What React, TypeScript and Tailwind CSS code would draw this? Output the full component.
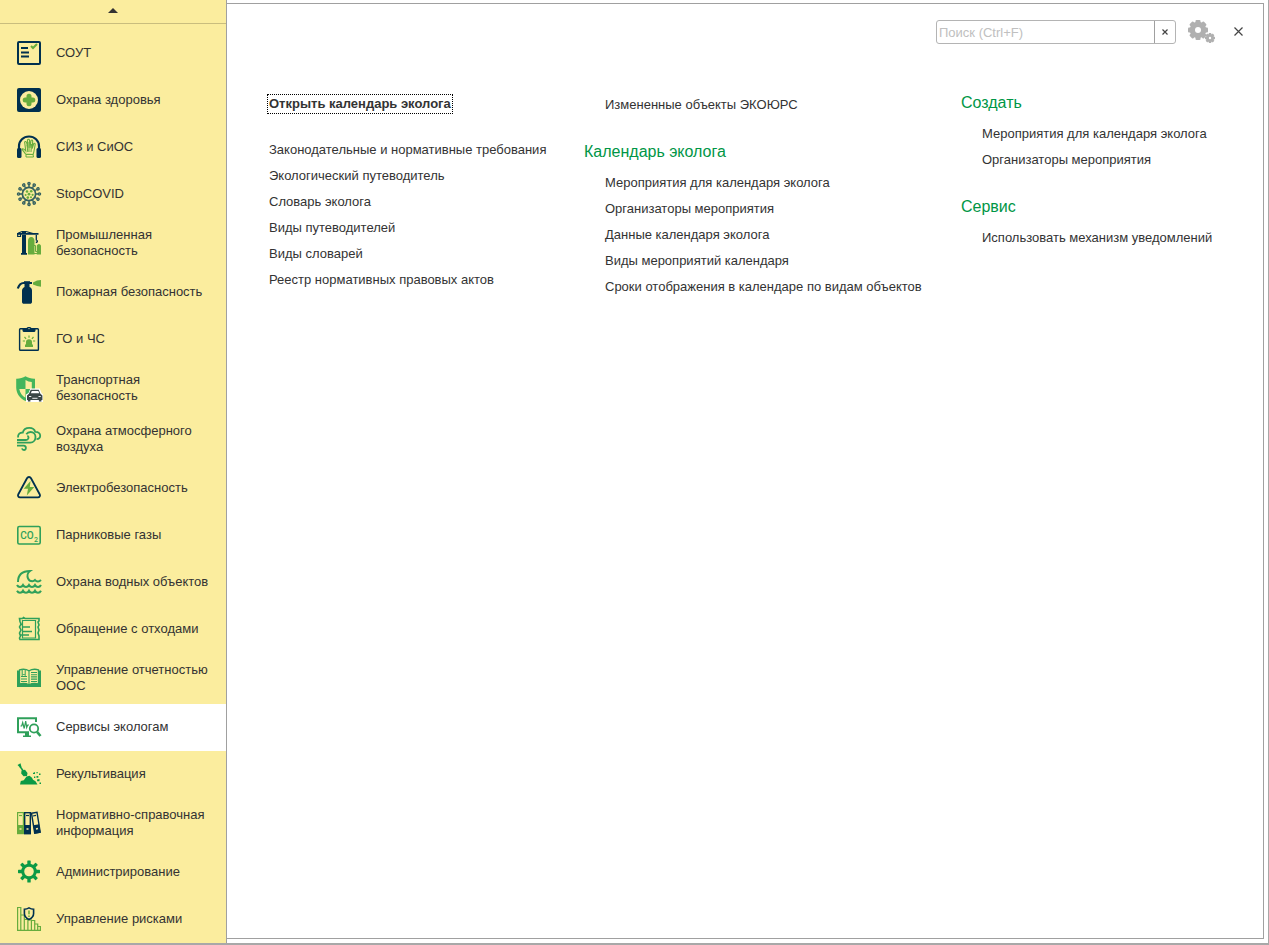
import React, { useState } from 'react';
import clsx from 'clsx';

const NAVY = '#00304f';
const LEAF = '#67ac3d';
const GREEN = '#2fa05a';
const CREAM = '#fbed9e';

const Icon = ({ children }: { children: React.ReactNode }) => (
  <svg width="24" height="24" viewBox="0 0 24 24" fill="none" className="shrink-0 overflow-visible" aria-hidden="true">
    {children}
  </svg>
);

const ChecklistIcon = () => (
  <Icon>
    <rect x="1" y="1" width="22" height="22" rx="1" stroke={NAVY} strokeWidth="2" />
    <path d="M4 7h7M4 11.5h8M4 15.5h8" stroke={NAVY} strokeWidth="1.8" />
    <path d="M14 5l2 2 4-4" stroke={LEAF} strokeWidth="2" />
  </Icon>
);

const HealthIcon = () => (
  <Icon>
    <rect width="24" height="24" rx="2" fill={NAVY} />
    <circle cx="12" cy="12" r="9" fill={CREAM} />
    <path d="M12 8.2v7.6M8.2 12h7.6" stroke={LEAF} strokeWidth="5" strokeLinecap="round" />
  </Icon>
);

const HeadphonesIcon = () => (
  <Icon>
    <path d="M2 14v-3a10 9.5 0 0 1 20 0v3" stroke={NAVY} strokeWidth="2.2" />
    <rect x="0" y="13" width="4.5" height="10" rx="1.5" fill={NAVY} />
    <rect x="19.5" y="13" width="4.5" height="10" rx="1.5" fill={NAVY} />
    <path d="M8.5 19c-1-2-3-3.5-3.5-5 1-.8 2.5.5 3.8 2L7.6 7c.8-1 1.5-.5 2 .5L11 13l-.5-8c.5-1 1.5-1 2 0l.5 8 1-7.5c.8-1 1.5-.5 1.700.5L15.200 13.500l1.600-5c.9-.6 1.500 0 1.400 1L17 16c-.3 2-.7 2.500-1 3.500z" stroke={LEAF} strokeWidth="1.100" />
    <path d="M12 7v10M14.500 9l-.5 8M10 10l.8 7" stroke={LEAF} strokeWidth="1" />
    <path d="M9 19.500h7l.5 2.500H9z" stroke={LEAF} strokeWidth="1" />
  </Icon>
);

const spikes = [0, 30, 60, 90, 120, 150, 180, 210, 240, 270, 300, 330];

const VirusIcon = () => (
  <Icon>
    <circle cx="12" cy="12" r="6.6" stroke="#35605f" strokeWidth="1.7" />
    {spikes.map((a) => (
      <g key={a} transform={`rotate(${a} 12 12)`} stroke="#35605f">
        <path d="M12 5V3" strokeWidth="1.4" />
        <circle cx="12" cy="1.6" r="1.1" strokeWidth="1.4" />
      </g>
    ))}
    <g fill={LEAF}>
      <circle cx="10" cy="9.5" r="1.3" />
      <circle cx="14.2" cy="9.3" r="1.3" />
      <circle cx="12" cy="12.2" r="1.4" />
      <circle cx="8.6" cy="13" r="1" />
      <circle cx="15.6" cy="12.8" r="1.1" />
      <circle cx="10.8" cy="15.6" r="1.3" />
      <circle cx="14" cy="15.3" r="1" />
    </g>
  </Icon>
);

const CraneIcon = () => (
  <Icon>
    <path d="M0 2h21.500v1.800H0zM5 0h4v2H5zM5 4h4v18H5zM4 22h6v1.800H4z" fill={NAVY} />
    <path d="M.7 3v2.500h2.800V3M9 .5l7 2M5 .5L1 2.200" stroke={NAVY} strokeWidth="1.200" />
    <path d="M19.300 4v5c1.500.5 1.500 2.500-.5 2.500" stroke={NAVY} strokeWidth="1.300" />
    <path d="M11 23.500V10c0-2 1-4 3.200-4s3.300 2 3.300 4v13.500zM19.800 23.500V15c0-1 1-2 2.100-2s2.100 1 2.100 2v8.500z" fill={LEAF} />
    <path d="M17 14.500h1.500v6H20M17 22.500h3" stroke={LEAF} strokeWidth="1" />
  </Icon>
);

const ExtinguisherIcon = () => (
  <Icon>
    <path d="M5 22V10.500C5 8.500 6.500 7.500 7.500 7V4h5v3c1.500.5 2.500 1.500 2.500 3.500V22c0 1.200-.8 1.800-2 1.800H7c-1.200 0-2-.6-2-1.800z" fill={NAVY} />
    <path d="M.8 8.500C2 5 3.500 3 6.500 3H15" stroke={NAVY} strokeWidth="2.200" />
    <path d="M7 1.200h6V3H7z" fill={NAVY} />
    <path d="M16 2.500L20 .6 24 0v6.800L20 6l-4-1.500z" fill={LEAF} />
  </Icon>
);

const ClipboardIcon = () => (
  <Icon>
    <rect x="2.600" y="1.700" width="18.800" height="21.500" rx=".8" stroke={NAVY} strokeWidth="1.400" />
    <path d="M5.500 1h4c.5-1.500 4.500-1.500 5 0h4v2.500c0 1-1 1.500-2 1.500h-9c-1 0-2-.5-2-1.500z" fill={NAVY} />
    <circle cx="12" cy="1.600" r=".7" fill={CREAM} />
    <path d="M9 17.500V15c0-1.800 1.200-2.800 3-2.800s3 1 3 2.800v2.500h1v2.500H8v-2.500z" fill={LEAF} />
    <path d="M12 8.500v2.300M7.500 10l1.600 1.800M16.500 10l-1.600 1.800M5.800 14H8M16 14h2.200" stroke={LEAF} strokeWidth="1.200" />
  </Icon>
);

const ShieldCarIcon = () => (
  <Icon>
    <path d="M8.500.3C6 2 2 3-.8 2.800v9C-.5 18 3 22.500 8.500 25 14 22.500 17.600 18 18 11.800v-9C15 3 11 2 8.500.3z" fill="#43b55c" />
    <path d="M8.500 4v9h6.300V6C12.500 6 10.500 5.200 8.500 4zM8.500 13H2.300c.6 4 3 7 6.200 8.700z" fill={CREAM} />
    <path d="M9 26v-7.500l2.500-1.500 1.800-4.500h9.400l1.800 4.500 1.500 1.500V26z" fill="#fff" />
    <path d="M10 19.500l2-1.700 1.700-4h8l1.700 4 2 1.700V24h-1v1.500h-2.500V24h-8.500v1.500h-2.500V24H10z" fill="#3b4746" />
    <path d="M13.800 17.300l1-2.300h6.500l1 2.300z" fill="#fff" />
    <path d="M12 20.500h2.300M21.500 20.500h2.300M15.300 22.300h5.200" stroke="#fff" strokeWidth=".9" />
  </Icon>
);

const WindIcon = () => (
  <Icon>
    <g stroke={GREEN} strokeWidth="1.800">
      <path d="M1 10.500C.8 7.300 3 5.300 5.800 5.500 6.500 2.700 9.300.9 12.300.9c3 0 5.200 1.500 6 4 2.800-.2 5 1.500 4.900 3.800 0 2-1.300 3.300-3.700 3.500" />
      <path d="M0 13h9c2.500 0 3.500-3.500 1.300-4" />
      <path d="M9.300 7.200c1-1.500 2.500-2.200 4.300-2.200 2.800 0 4.900 2.200 4.900 5 0 3.200-2.200 5.500-5.200 5.700H0" />
      <path d="M0 18.700h6.800c2.800.2 2.700 4.300.2 4.300-1.200 0-1.800-.6-2-1.600" />
    </g>
  </Icon>
);

const VoltageIcon = () => (
  <Icon>
    <path d="M10 2.200c.9-1.600 3.100-1.600 4 0l8.800 16.300c.7 1.500-.3 2.800-1.800 2.800H3c-1.500 0-2.500-1.300-1.800-2.800z" stroke={NAVY} strokeWidth="1.800" />
    <path d="M13.500 5L6.700 12.800H11L9.800 19.500 17.300 11h-4.500z" fill={LEAF} />
  </Icon>
);

const Co2Icon = () => (
  <Icon>
    <rect x=".8" y="3.500" width="22.400" height="17.500" rx="1.500" stroke={GREEN} strokeWidth="1.600" />
    <text x="3.300" y="16" fontSize="10" fontWeight="500" fontFamily="Roboto, sans-serif" fill={GREEN}>CO</text>
    <text x="17" y="18.500" fontSize="7" fontWeight="500" fontFamily="Roboto, sans-serif" fill={GREEN}>2</text>
  </Icon>
);

const WaterIcon = () => (
  <Icon>
    <g stroke={GREEN} strokeWidth="2">
      <path d="M1 12C1 5 5 1 13 1c-2.500 1.800-3 5-2 7.300.8 2 2.500 2.900 4.300 2.900 1.500 0 2.700-1.200 2.700-1.200.8 1 1.800 1.500 3 1.500s2-.5 3-1.500" />
      <path d="M0 15c.8 1.500 1.800 2 3 2s2.200-.5 3-2c.8 1.500 1.800 2 3 2s2.200-.5 3-2c.8 1.500 1.800 2 3 2s2.200-.5 3-2c.8 1.500 1.800 2 3 2s2.200-.5 3-2" />
      <path d="M0 20.700c.8 1.500 1.800 2 3 2s2.200-.5 3-2c.8 1.500 1.800 2 3 2s2.200-.5 3-2c.8 1.500 1.800 2 3 2s2.200-.5 3-2c.8 1.500 1.800 2 3 2s2.200-.5 3-2" />
    </g>
  </Icon>
);

const WasteIcon = () => (
  <Icon>
    <path d="M2.500 1.500h3l1-1 1.500 1h14v2.500l-1 1 1 3-1 2 1 3-1 3 1 3v3.500h-19l-.5-1.500 1-2-1-3 1.500-3-1.500-3 1.500-3-1-2.500z" stroke={GREEN} strokeWidth="1.600" />
    <path d="M5.500 3.500h13v17.500h-13z" stroke={GREEN} strokeWidth="1.200" />
    <path d="M6 10h7M6 14.500h9M6 18h6M3 7.500h3M3 18h2" stroke={GREEN} strokeWidth="1.400" />
  </Icon>
);

const BookIcon = () => (
  <Icon>
    <path d="M0 4.500h2V18h20V4.500h2V21H0z" fill={GREEN} />
    <path d="M2.500 3.800c3-.8 7-.5 9.500 1 2.500-1.500 6.500-1.800 9.500-1v14c-3-.6-7-.4-9.500 1-2.500-1.400-6.500-1.600-9.500-1z" fill={CREAM} stroke={GREEN} strokeWidth="1.300" />
    <path d="M12 5v13.500M4 10.500h6M4 13h6M4 15.500h6M14 6.500h6M14 8.700h6M14 10.900h6M14 13.100h6M14 15.500h6" stroke={GREEN} strokeWidth="1.100" />
    <path d="M5.200 3.500h3v6L6.700 8 5.200 9.500z" fill={CREAM} stroke={GREEN} strokeWidth="1" />
  </Icon>
);

const MonitorIcon = () => (
  <Icon>
    <path d="M12 17.200H1V3.200h18V7" stroke={GREEN} strokeWidth="2" />
    <path d="M8 17.500h4v3h2V22H6v-1.500h2z" fill={GREEN} />
    <path d="M3.500 11h1.200l1-3.500 1.500 6L8.700 6l1 6.500 1-2.500H12" stroke={GREEN} strokeWidth="1.200" />
    <circle cx="17" cy="13.500" r="4.200" stroke={GREEN} strokeWidth="1.800" />
    <path d="M20 16.800l3.500 4.200" stroke={GREEN} strokeWidth="2.600" />
  </Icon>
);

const ShovelIcon = () => (
  <Icon>
    <g fill="#0b9a45">
      <path d="M3 22.500l.8-3.500 3-.8 2.700-3.700 3-.8 2.500 2 1 2 2.500 1.500 2 3.300z" />
      <path d="M.5 3L3.500 1.300 4.500 5l-1 1zM4.500 8.500l3.500-.8L10.500 11l-.5 3-3.500.2-2.300-2.700z" />
      <path d="M16 11l2-1v2h-2zM19.500 14h1.800v1.700h-1.800zM22 11.500h1.500V13H22zM17 14.500h1.300V16H17zM20 17.500l2.500-.5v2.300h-2.300zM22.500 20.500H24V22h-1.500zM19.500 10h1.200v1.200h-1.200z" />
    </g>
    <path d="M3 4.500L7 10" stroke="#0b9a45" strokeWidth="1.500" />
  </Icon>
);

const BindersIcon = () => (
  <Icon>
    <rect x=".6" y="1.600" width="5.800" height="21" stroke={LEAF} strokeWidth="1.200" />
    <path d="M.6 14h5.800v8.600H.6z" fill={LEAF} />
    <path d="M2 4.500h3" stroke={LEAF} strokeWidth="1.200" />
    <rect x="7.700" y="1.700" width="5.600" height="21" stroke={NAVY} strokeWidth="1.400" />
    <path d="M7 14h7v9H7z" fill={NAVY} />
    <path d="M9 4.500h3" stroke={NAVY} strokeWidth="1.200" />
    <path d="M14.500 2.200l5.500-1 3.200 20-5.500 1z" stroke={NAVY} strokeWidth="1.400" />
    <path d="M16.300 14.200l5.800-1 1.500 8.500-6 1z" fill={NAVY} />
    <path d="M16 5l3-.6" stroke={NAVY} strokeWidth="1.200" />
    <path d="M2.500 18h2M9.500 18h2M19 18l2-.4" stroke={CREAM} strokeWidth="1.500" />
  </Icon>
);

const teeth = [0, 45, 90, 135, 180, 225, 270, 315];

const GearIcon = () => (
  <Icon>
    <circle cx="12" cy="11.500" r="6.300" stroke="#0b9a45" strokeWidth="3" />
    {teeth.map((a) => (
      <rect key={a} x="10.300" y=".5" width="3.400" height="4.500" rx=".6" fill="#0b9a45" transform={`rotate(${a} 12 11.500)`} />
    ))}
  </Icon>
);

const RiskIcon = () => (
  <Icon>
    <path d="M.6.500h3.200v22.800H.6zM3.800 8h3.500v15.300H3.800zM7.300 12.500h3.600v10.800H7.300zM10.900 13h3.500v10.300h-3.500zM14.400 13.500h3.300v9.800h-3.300zM17.700 17h3v6.300h-3zM20.700 19.500h2.700v3.800h-2.700z" stroke={LEAF} strokeWidth="1.200" />
    <path d="M12 .9c1.700 1 3.200 1.300 4.600 1.300v4.300c0 2.700-2 4.800-4.600 6-2.600-1.200-4.600-3.300-4.600-6V2.200C8.800 2.200 10.300 1.900 12 .9z" fill={CREAM} stroke={NAVY} strokeWidth="1.600" />
    <path d="M12 3.500v3.800M12 8.500V10" stroke={LEAF} strokeWidth="1.500" />
  </Icon>
);

const SettingsGears = () => (
  <svg width="28" height="24" viewBox="0 0 28 24" aria-hidden="true">
    <g fill="#b0b0b0">
      <circle cx="10" cy="10" r="8.300" />
      {teeth.map((a) => (
        <rect key={a} x="7.500" y="0" width="5" height="5" rx="1" transform={`rotate(${a} 10 10)`} />
      ))}
      <circle cx="22" cy="18" r="4" />
      {teeth.map((a) => (
        <rect key={a} x="20.800" y="13" width="2.400" height="3" transform={`rotate(${a} 22 18)`} />
      ))}
    </g>
    <circle cx="10" cy="10" r="3" fill="#fff" />
    <circle cx="22" cy="18" r="1.200" fill="#fff" />
  </svg>
);

const sections = [
  { label: 'СОУТ', icon: ChecklistIcon },
  { label: 'Охрана здоровья', icon: HealthIcon },
  { label: 'СИЗ и СиОС', icon: HeadphonesIcon },
  { label: 'StopCOVID', icon: VirusIcon },
  { label: 'Промышленная безопасность', icon: CraneIcon },
  { label: 'Пожарная безопасность', icon: ExtinguisherIcon },
  { label: 'ГО и ЧС', icon: ClipboardIcon },
  { label: 'Транспортная безопасность', icon: ShieldCarIcon },
  { label: 'Охрана атмосферного воздуха', icon: WindIcon },
  { label: 'Электробезопасность', icon: VoltageIcon },
  { label: 'Парниковые газы', icon: Co2Icon },
  { label: 'Охрана водных объектов', icon: WaterIcon },
  { label: 'Обращение с отходами', icon: WasteIcon },
  { label: 'Управление отчетностью ООС', icon: BookIcon },
  { label: 'Сервисы экологам', icon: MonitorIcon },
  { label: 'Рекультивация', icon: ShovelIcon },
  { label: 'Нормативно-справочная информация', icon: BindersIcon },
  { label: 'Администрирование', icon: GearIcon },
  { label: 'Управление рисками', icon: RiskIcon },
];

const LinkList = ({ items }: { items: string[] }) => (
  <ul>
    {items.map((item) => (
      <li key={item} className="h-[26px] leading-[26px] whitespace-nowrap">
        <a href="#" className="hover:underline">{item}</a>
      </li>
    ))}
  </ul>
);

const Group = ({ title, items }: { title: string; items: string[] }) => (
  <section>
    <h2 className="mb-2 text-base leading-5 text-[#009646]">{title}</h2>
    <div className="pl-[21px]">
      <LinkList items={items} />
    </div>
  </section>
);

const App: React.FC = () => {
  const [active, setActive] = useState('Сервисы экологам');
  const [query, setQuery] = useState('');

  return (
    <div className="flex min-h-screen border-r border-b-2 border-[#a8a8a8] bg-white font-['Liberation_Sans',Arial,sans-serif] text-[13px] text-[#333333]">
      {/* Sections */}
      <aside className="w-[227px] shrink-0 border-r border-[#a0a0a0] bg-[#fbed9e]">
        <button aria-label="Прокрутить вверх" className="flex h-6 w-full items-center justify-center border-b border-[#c9bd7e] pb-[2px]">
          <svg width="10" height="5" viewBox="0 0 10 5" aria-hidden="true">
            <path d="M5 0l5 5H0z" fill="#333" />
          </svg>
        </button>
        <nav className="pt-[6px]">
          {sections.map(({ label, icon: SectionIcon }) => (
            <button
              key={label}
              onClick={() => setActive(label)}
              className={clsx(
                'flex min-h-[47px] w-full items-center gap-[15px] pt-[9px] pr-3 pb-[10px] pl-[17px] text-left leading-4',
                active === label && 'bg-white'
              )}
            >
              <SectionIcon />
              <span>{label}</span>
            </button>
          ))}
        </nav>
      </aside>

      {/* Commands */}
      <main className="mt-[3px] mr-1 mb-1 flex-1 border-t border-r border-b border-[#a0a0a0]">
        <header className="flex items-center justify-end pt-4 pr-5">
          <div className="flex h-6 w-60 rounded-[3px] border border-[#b4b4b4]">
            <input
              type="text"
              aria-label="Поиск"
              placeholder="Поиск (Ctrl+F)"
              value={query}
              onChange={(e) => setQuery(e.target.value)}
              className="min-w-0 flex-1 px-[2px] pt-[2px] outline-none placeholder:text-[#c0c0c0]"
            />
            <button aria-label="Очистить" onClick={() => setQuery('')} className="flex w-[21px] items-center justify-center border-l border-[#a0a0a0]">
              <svg width="6" height="6" viewBox="0 0 6 6" aria-hidden="true">
                <path d="M.5.5l5 5M5.500.5l-5 5" stroke="#444" strokeWidth="1.200" />
              </svg>
            </button>
          </div>
          <button aria-label="Настройки" className="ml-3">
            <SettingsGears />
          </button>
          <button aria-label="Закрыть" className="ml-[18px] pb-px">
            <svg width="9" height="9" viewBox="0 0 9 9" aria-hidden="true">
              <path d="M.5.5l8 8M8.500.5l-8 8" stroke="#444" strokeWidth="1.200" />
            </svg>
          </button>
        </header>

        <div className="flex items-start pt-12 pl-10">
          <div className="w-[317px] pt-[2px]">
            <a href="#" className="block w-fit border border-dotted border-black px-px leading-[18px] font-bold whitespace-nowrap">
              Открыть календарь эколога
            </a>
            <div className="pt-[23px] pl-[2px]">
              <LinkList
                items={[
                  'Законодательные и нормативные требования',
                  'Экологический путеводитель',
                  'Словарь эколога',
                  'Виды путеводителей',
                  'Виды словарей',
                  'Реестр нормативных правовых актов',
                ]}
              />
            </div>
          </div>

          <div className="w-[377px]">
            <div className="pb-6 pl-[21px]">
              <LinkList items={['Измененные объекты ЭКОЮРС']} />
            </div>
            <Group
              title="Календарь эколога"
              items={[
                'Мероприятия для календаря эколога',
                'Организаторы мероприятия',
                'Данные календаря эколога',
                'Виды мероприятий календаря',
                'Сроки отображения в календаре по видам объектов',
              ]}
            />
          </div>

          <div className="flex flex-col gap-6 pt-px">
            <Group title="Создать" items={['Мероприятия для календаря эколога', 'Организаторы мероприятия']} />
            <Group title="Сервис" items={['Использовать механизм уведомлений']} />
          </div>
        </div>
      </main>
    </div>
  );
};

export default App;
